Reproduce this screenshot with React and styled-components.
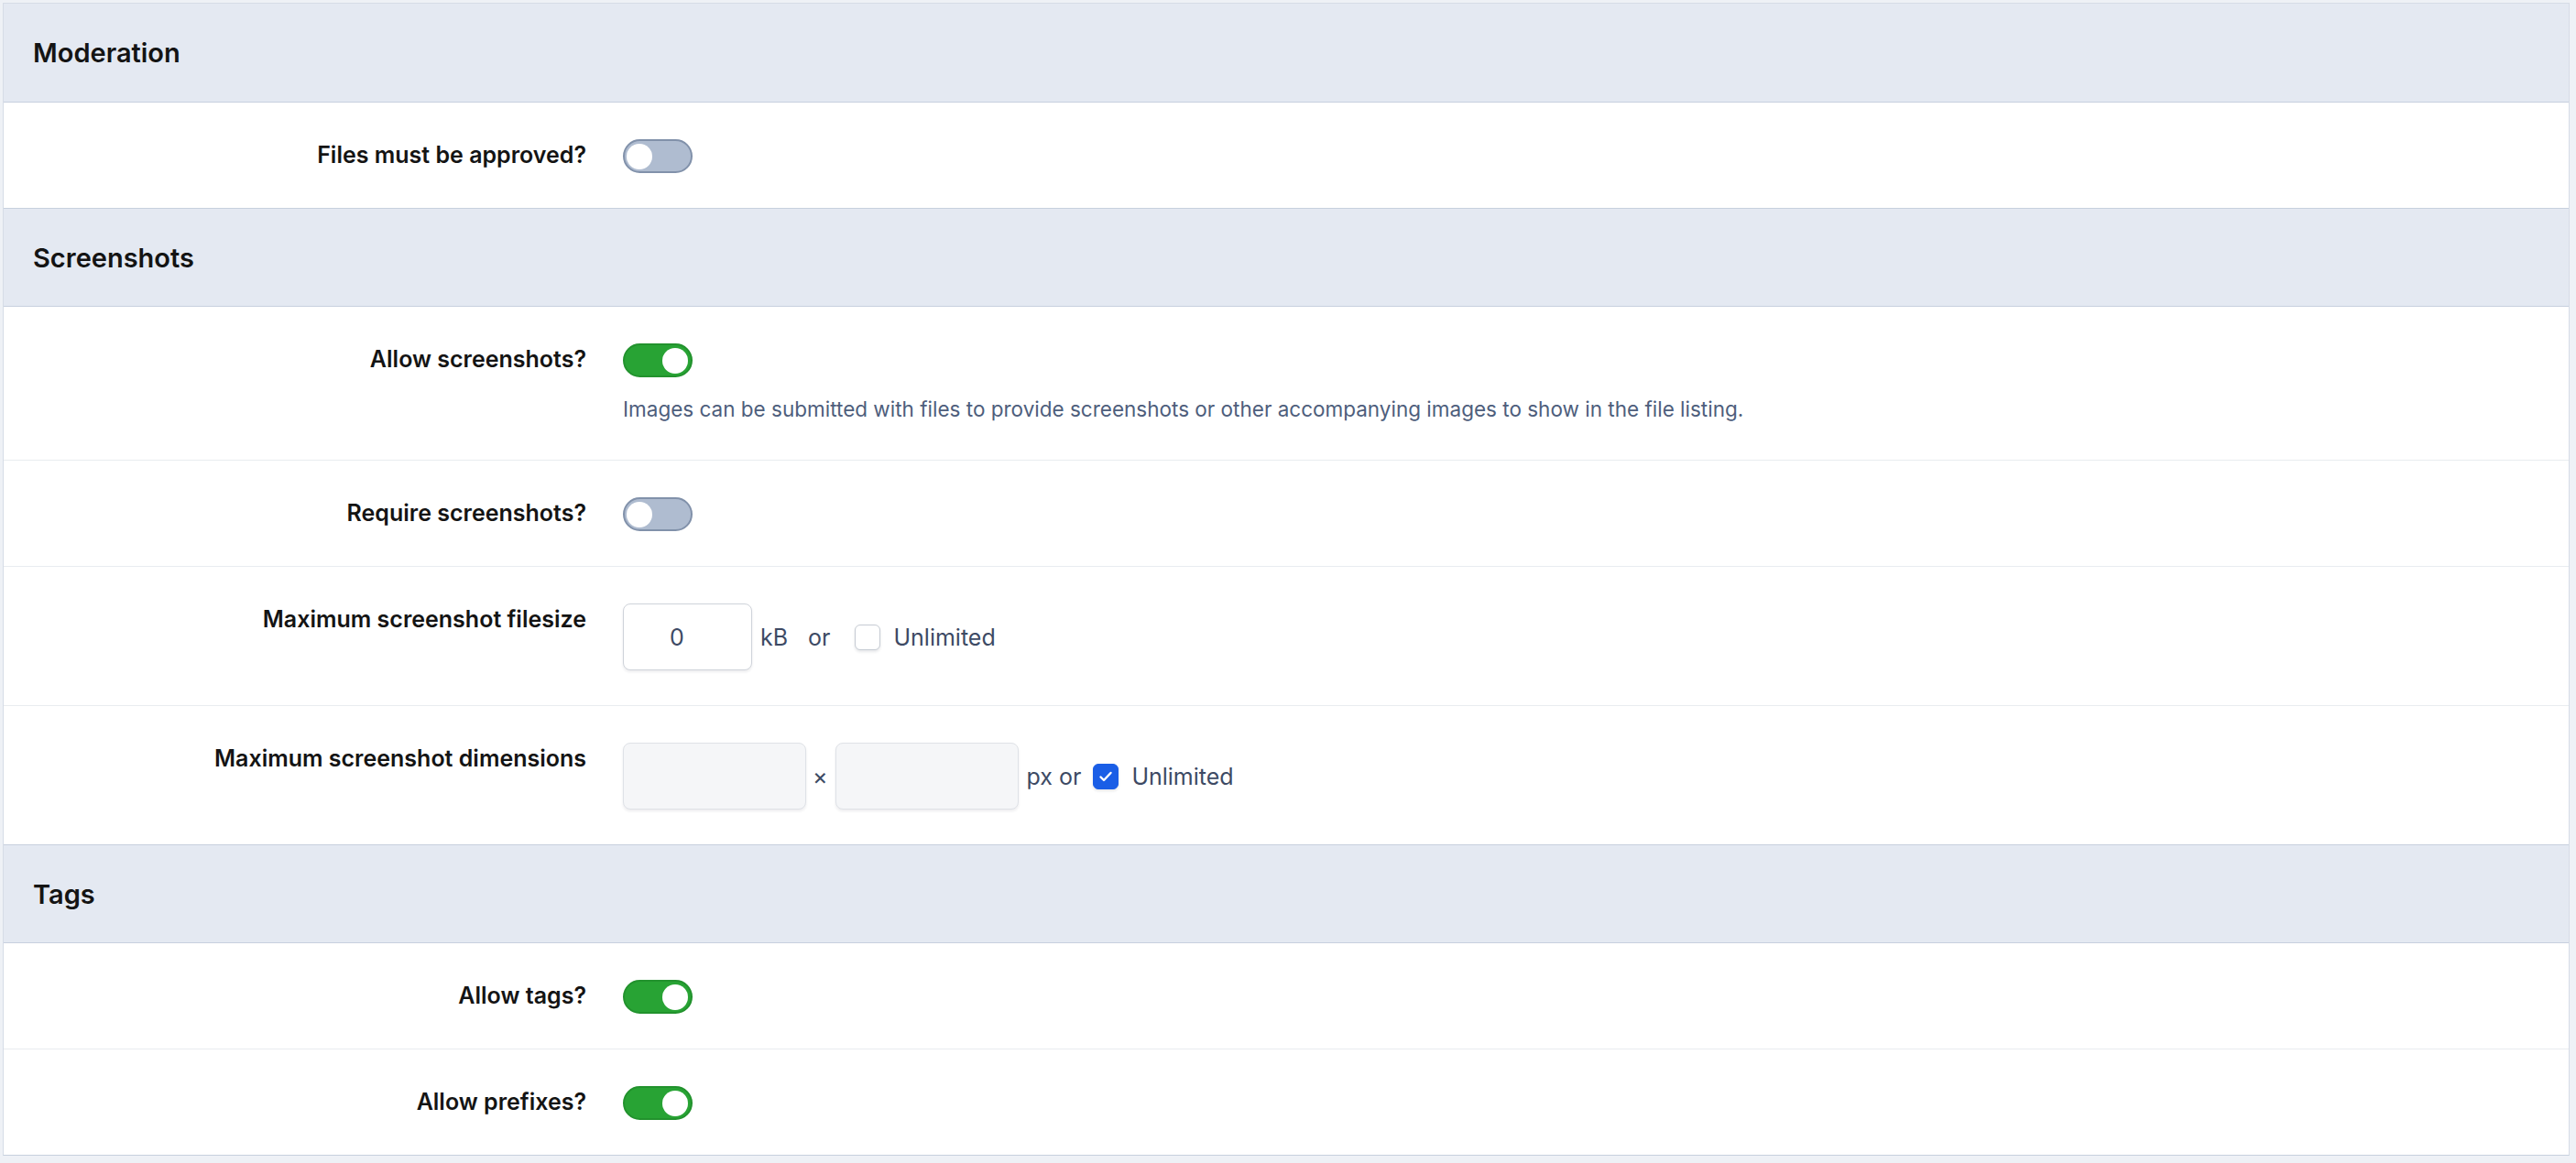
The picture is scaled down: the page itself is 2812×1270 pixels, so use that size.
import React from "react";
import styled, { createGlobalStyle } from "styled-components";

const GlobalStyle = createGlobalStyle`
  * { box-sizing: border-box; }
  body {
    margin: 0;
    background: #eef1f6;
    font-family: "Inter", "Liberation Sans", sans-serif;
    color: #141414;
  }
`;

const Page = styled.div`
  padding: 3px 7px 0 3px;
  height: 1270px;
  overflow: hidden;
`;

const Block = styled.div`
  background: #fff;
  border: 1px solid #d6dce6;
  border-bottom: 1px solid #c7d0de;
`;

const SectionHeader = styled.h3`
  margin: 0;
  height: 108px;
  display: flex;
  align-items: center;
  padding: 0 32px;
  background: #e4e9f2;
  border-bottom: 1px solid #c7d0de;
  border-top: ${(p) => (p.first ? "none" : "1px solid #c7d0de")};
  font-size: 29px;
  font-weight: 600;
  color: #141414;
`;

const Row = styled.div`
  display: grid;
  grid-template-columns: 656px 1fr;
  border-top: ${(p) => (p.first ? "none" : "1px solid #e9ecf0")};
`;

const Label = styled.div`
  padding: 38px 20px 38px 0;
  text-align: right;
  font-size: 25px;
  line-height: 39px;
  font-weight: 600;
  color: #141414;
`;

const Control = styled.div`
  padding: 40px 20px 38px 20px;
  display: flex;
  flex-direction: column;
  align-items: flex-start;
`;

const Toggle = styled.span`
  position: relative;
  display: inline-block;
  width: 76px;
  height: 37px;
  border-radius: 19px;
  border: 2px solid ${(p) => (p.on ? "#22922d" : "#8191aa")};
  background: ${(p) => (p.on ? "#28a334" : "#afbcd0")};

  &::after {
    content: "";
    position: absolute;
    top: 2.5px;
    left: ${(p) => (p.on ? "41px" : "2px")};
    width: 28px;
    height: 28px;
    border-radius: 50%;
    background: #fff;
  }
`;

const Explain = styled.div`
  margin-top: 18px;
  font-size: 22.5px;
  line-height: 34px;
  color: #4e5e7c;
`;

const Inline = styled.div`
  display: flex;
  align-items: center;
  font-size: 25px;
  color: #3d4a64;
`;

const Input = styled.div`
  width: ${(p) => p.w}px;
  height: 73px;
  border-radius: 8px;
  border: 1px solid ${(p) => (p.disabled ? "#dfe2e7" : "#cfd3da")};
  background: ${(p) => (p.disabled ? "#f5f6f8" : "#fff")};
  box-shadow: 0 2px 3px rgba(20, 30, 50, 0.08);
  display: flex;
  align-items: center;
  padding-left: 50px;
  font-size: 25px;
  color: #3d4a64;
`;

const Unit = styled.span`
  margin-left: ${(p) => p.ml || 0}px;
  margin-right: ${(p) => p.mr || 0}px;
`;

const CheckBox = styled.span`
  width: 28px;
  height: 28px;
  border-radius: 6px;
  display: inline-flex;
  align-items: center;
  justify-content: center;
  border: 1px solid ${(p) => (p.checked ? "#1a5ee6" : "#c6cbd3")};
  background: ${(p) => (p.checked ? "#1a5ee6" : "#fff")};
  box-shadow: 0 2px 3px rgba(20, 30, 50, 0.1);
  margin-right: 14px;
`;

const Check = () => (
  <svg width="18" height="18" viewBox="0 0 18 18" fill="none">
    <path d="M3.5 9.5l3.5 3.5 7.5-8" stroke="#fff" strokeWidth="2.4" strokeLinecap="round" strokeLinejoin="round" />
  </svg>
);

const ToggleRow = ({ label, on, first, explain }) => (
  <Row first={first}>
    <Label>{label}</Label>
    <Control>
      <Toggle on={on} />
      {explain && <Explain>{explain}</Explain>}
    </Control>
  </Row>
);

const App = () => {
  return (
    <>
      <GlobalStyle />
      <Page>
        <Block>
          <SectionHeader first>Moderation</SectionHeader>
          <ToggleRow first label="Files must be approved?" on={false} />

          <SectionHeader>Screenshots</SectionHeader>
          <ToggleRow
            first
            label="Allow screenshots?"
            on
            explain="Images can be submitted with files to provide screenshots or other accompanying images to show in the file listing."
          />
          <ToggleRow label="Require screenshots?" on={false} />
          <Row>
            <Label>Maximum screenshot filesize</Label>
            <Control>
              <Inline>
                <Input w={141}>0</Input>
                <Unit ml={9}>kB</Unit>
                <Unit ml={22} mr={27}>or</Unit>
                <CheckBox />
                <span>Unlimited</span>
              </Inline>
            </Control>
          </Row>
          <Row>
            <Label>Maximum screenshot dimensions</Label>
            <Control>
              <Inline>
                <Input w={200} disabled />
                <Unit ml={7} mr={8}>×</Unit>
                <Input w={200} disabled />
                <Unit ml={9} mr={13}>px or</Unit>
                <CheckBox checked>
                  <Check />
                </CheckBox>
                <span>Unlimited</span>
              </Inline>
            </Control>
          </Row>

          <SectionHeader>Tags</SectionHeader>
          <ToggleRow first label="Allow tags?" on />
          <ToggleRow label="Allow prefixes?" on />
        </Block>
      </Page>
    </>
  );
};

export default App;
